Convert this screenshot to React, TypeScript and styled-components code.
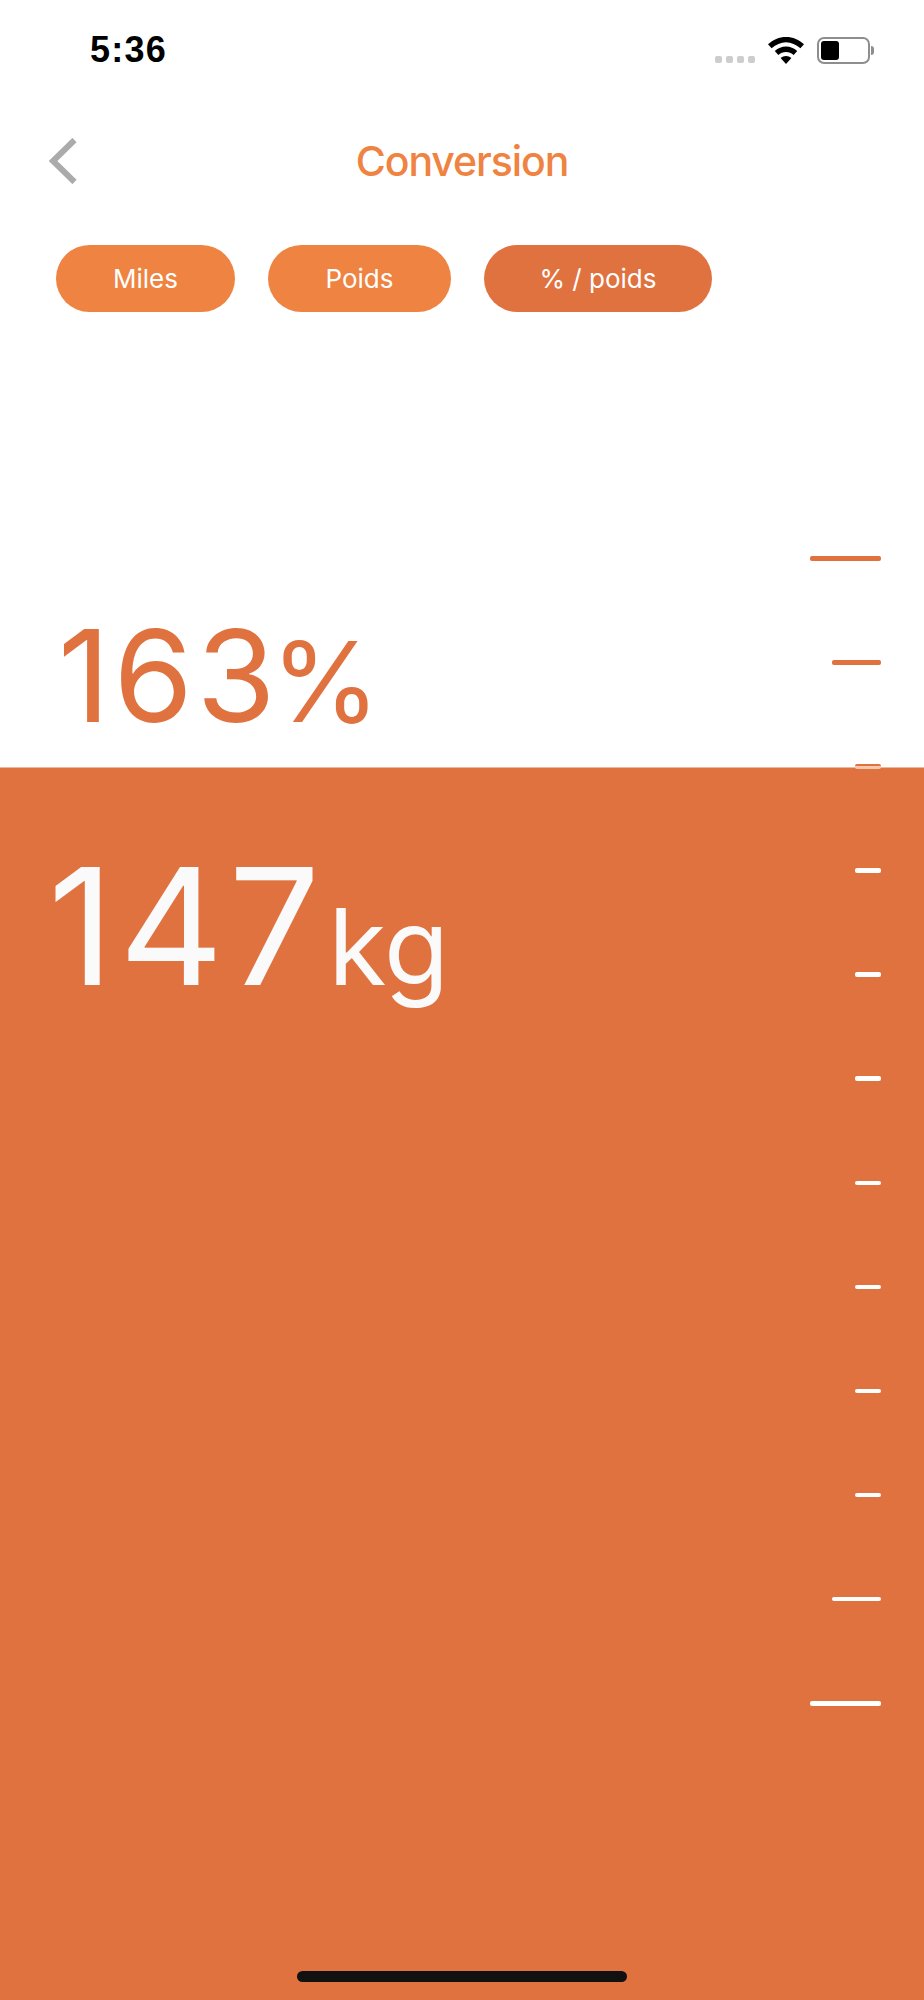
import styled, { createGlobalStyle } from "styled-components";

const ORANGE = "#ef8341";
const DARK_ORANGE = "#e07240";

const tabs = [
  { label: "Miles", width: 179, active: false },
  { label: "Poids", width: 183, active: false },
  { label: "% / poids", width: 228, active: true },
];

const ticks = [
  { width: 71, tone: "orange" },
  { width: 49, tone: "orange" },
  { width: 26, tone: "split" },
  { width: 26, tone: "white" },
  { width: 26, tone: "white" },
  { width: 26, tone: "white" },
  { width: 26, tone: "white" },
  { width: 26, tone: "white" },
  { width: 26, tone: "white" },
  { width: 26, tone: "white" },
  { width: 49, tone: "white" },
  { width: 71, tone: "white" },
];

function App() {
  return (
    <Screen>
      <GlobalStyle />
      <StatusBar>
        <Time>5:36</Time>
        <StatusIcons>
          <SignalDots>
            <Dot />
            <Dot />
            <Dot />
            <Dot />
          </SignalDots>
          <svg width="36" height="27" viewBox="0 0 36 27">
            <path d="M18 0C11 0 5 2.7 0 7.3l3.6 4C8 7.5 12.8 5.2 18 5.2s10 2.3 14.4 6.1l3.6-4C31 2.7 25 0 18 0z" fill="#000" />
            <path d="M18 9.6c-4.2 0-8 1.7-11.2 4.5l3.5 3.9c2.2-1.9 4.8-3.1 7.7-3.1s5.500 1.200 7.700 3.100l3.500-3.900C26 11.300 22.200 9.600 18 9.600z" fill="#000" />
            <path d="M18 19c-2 0-3.900.8-5.400 2.100L18 27l5.400-5.900C21.900 19.800 20 19 18 19z" fill="#000" />
          </svg>
          <Battery>
            <BatteryFill />
          </Battery>
        </StatusIcons>
      </StatusBar>

      <NavBar>
        <BackButton>
          <svg width="28" height="46" viewBox="0 0 28 46">
            <path d="M25.500 2L4 23l21.500 21" fill="none" stroke="#ababab" strokeWidth="6" />
          </svg>
        </BackButton>
        <Title>Conversion</Title>
      </NavBar>

      <TabRow>
        {tabs.map((tab) => (
          <Tab key={tab.label} $width={tab.width} $active={tab.active}>
            {tab.label}
          </Tab>
        ))}
      </TabRow>

      <PercentBlock>
        <PercentValue>
          163<PercentUnit>%</PercentUnit>
        </PercentValue>
      </PercentBlock>

      <Panel>
        <WeightRow>
          <WeightValue>147</WeightValue>
          <WeightUnit>kg</WeightUnit>
        </WeightRow>
        <HomeIndicator />
      </Panel>

      <Scale>
        {ticks.map((tick, i) => (
          <Tick key={i} $width={tick.width} $tone={tick.tone} />
        ))}
      </Scale>
    </Screen>
  );
}

export default App;

const GlobalStyle = createGlobalStyle`
  html, body {
    margin: 0;
    padding: 0;
    background: #fff;
  }
`;

const Screen = styled.div`
  position: relative;
  width: 924px;
  height: 2000px;
  display: flex;
  flex-direction: column;
  overflow: hidden;
  background: #fff;
  font-family: Inter, "Liberation Sans", sans-serif;
`;

const StatusBar = styled.div`
  height: 100px;
  box-sizing: border-box;
  padding: 36px 54px 0 90px;
  display: flex;
  justify-content: space-between;
  align-items: flex-start;
`;

const Time = styled.div`
  font-family: "Liberation Sans", sans-serif;
  font-weight: 700;
  font-size: 36px;
  line-height: 28px;
  letter-spacing: 1.2px;
  color: #000;
`;

const StatusIcons = styled.div`
  display: flex;
  align-items: flex-start;
  gap: 13px;
  padding-top: 1px;
`;

const SignalDots = styled.div`
  display: flex;
  gap: 4px;
  margin-top: 19px;
`;

const Dot = styled.span`
  width: 7px;
  height: 7px;
  border-radius: 2px;
  background: #cdcdcd;
`;

const Battery = styled.div`
  position: relative;
  width: 53px;
  height: 27px;
  box-sizing: border-box;
  border: 2px solid #8e8e8e;
  border-radius: 7px;
  padding: 2px;

  &::after {
    content: "";
    position: absolute;
    right: -6px;
    top: 7px;
    width: 3px;
    height: 9px;
    border-radius: 0 3px 3px 0;
    background: #8e8e8e;
  }
`;

const BatteryFill = styled.div`
  width: 18px;
  height: 100%;
  border-radius: 3px;
  background: #000;
`;

const NavBar = styled.div`
  position: relative;
  height: 122px;
  display: flex;
  align-items: center;
  justify-content: center;
`;

const BackButton = styled.div`
  position: absolute;
  left: 49px;
  top: 38px;
  line-height: 0;
`;

const Title = styled.h1`
  margin: 0;
  font-size: 41px;
  font-weight: 500;
  letter-spacing: -1.1px;
  color: ${ORANGE};
`;

const TabRow = styled.div`
  display: flex;
  gap: 33px;
  padding: 23px 0 0 56px;
`;

const Tab = styled.button<{ $width: number; $active: boolean }>`
  width: ${(p) => p.$width}px;
  height: 67px;
  padding: 0;
  border: 0;
  border-radius: 34px;
  background: ${(p) => (p.$active ? DARK_ORANGE : ORANGE)};
  color: #fff;
  font-family: inherit;
  font-size: 26px;
`;

const PercentBlock = styled.div`
  height: 455px;
  box-sizing: border-box;
  padding: 286px 0 0 58px;
  color: ${DARK_ORANGE};
`;

const PercentValue = styled.div`
  font-size: 128px;
  line-height: 155px;
  letter-spacing: 3.500px;
  white-space: nowrap;
`;

const PercentUnit = styled.span`
  font-size: 111px;
  letter-spacing: 0;
  margin-left: -8px;
`;

const Panel = styled.div`
  flex: 1;
  display: flex;
  flex-direction: column;
  border-top: 1px solid #eeb79c;
  background: ${DARK_ORANGE};
  color: #fafafa;
`;

const WeightRow = styled.div`
  display: flex;
  align-items: baseline;
  padding: 60px 0 0 48px;
`;

const WeightValue = styled.span`
  font-size: 162px;
  line-height: 196px;
  letter-spacing: 5px;
`;

const WeightUnit = styled.span`
  font-size: 106px;
  line-height: 196px;
  margin-left: 3px;
`;

const HomeIndicator = styled.div`
  align-self: center;
  margin-top: auto;
  margin-bottom: 18px;
  width: 330px;
  height: 11px;
  border-radius: 6px;
  background: #111;
`;

const Scale = styled.div`
  position: absolute;
  top: 556px;
  right: 43px;
  display: flex;
  flex-direction: column;
  align-items: flex-end;
  gap: 99.600px;
`;

const Tick = styled.div<{ $width: number; $tone: string }>`
  width: ${(p) => p.$width}px;
  height: 4.500px;
  border-radius: 2px;
  background: ${(p) =>
    p.$tone === "orange"
      ? DARK_ORANGE
      : p.$tone === "split"
        ? `linear-gradient(${DARK_ORANGE} 50%, #f6c7ac 50%)`
        : "#fff"};
`;
